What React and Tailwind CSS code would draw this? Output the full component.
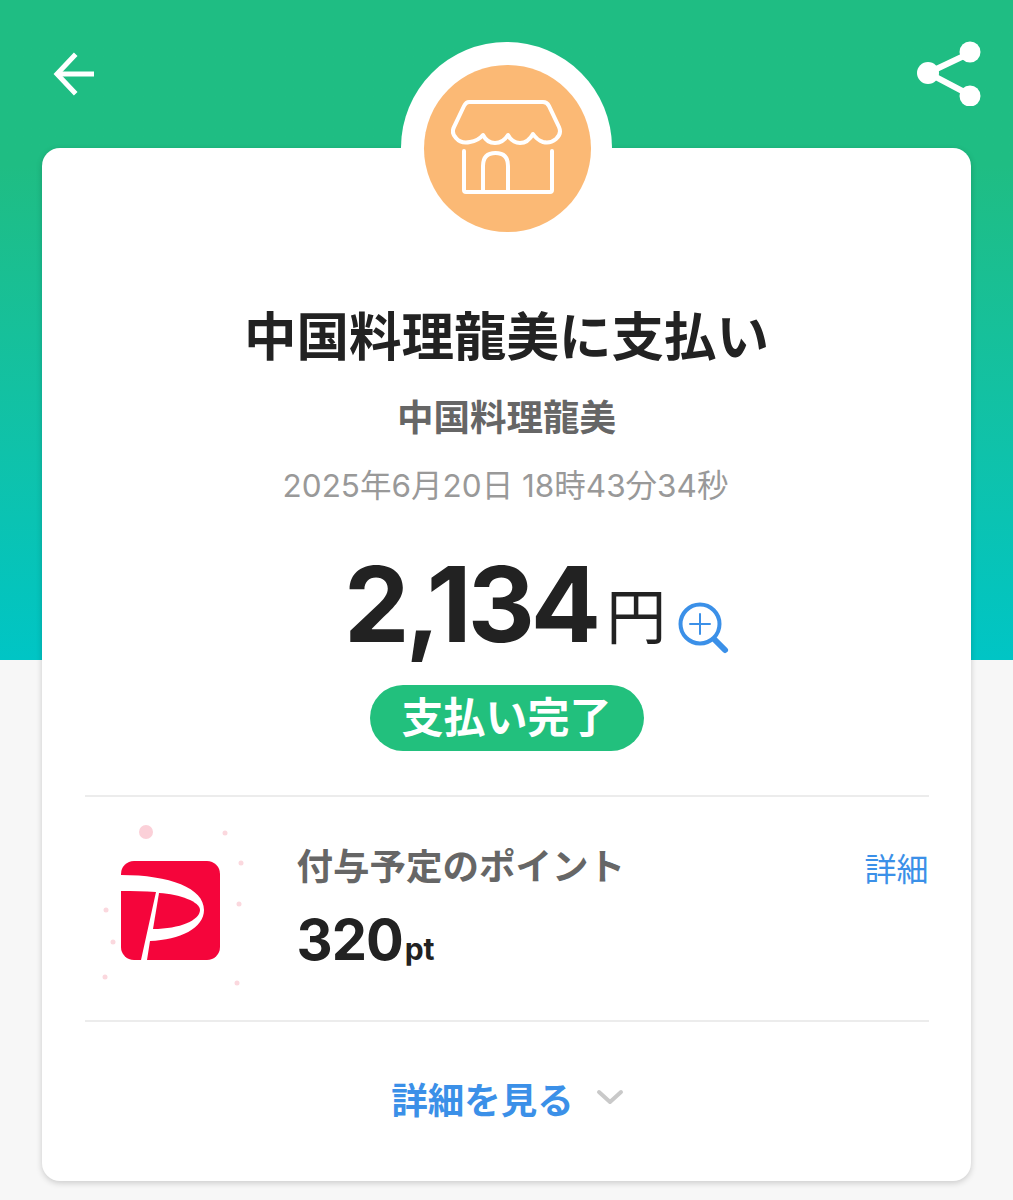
const fontStack = { fontFamily: '"Inter", "Noto Sans CJK JP", sans-serif' };

function BackIcon() {
  return (
    <svg width="46" height="44" viewBox="0 0 46 44" fill="none" stroke="white" strokeWidth="5" strokeLinecap="square">
      <path d="M22 4 L5 22 L22 40" strokeLinejoin="miter" />
      <path d="M7 22 H42" strokeLinecap="butt" />
    </svg>
  );
}

function ShareIcon() {
  return (
    <svg width="66" height="66" viewBox="0 0 66 66" fill="white">
      <path d="M52 14 L12 33 L52 54" fill="none" stroke="white" strokeWidth="6" />
      <circle cx="54" cy="12" r="10.5" />
      <circle cx="12" cy="33" r="11" />
      <circle cx="54" cy="56" r="10.5" />
    </svg>
  );
}

function ShopIcon() {
  return (
    <svg width="112" height="96" viewBox="0 0 112 96" fill="none" stroke="white" strokeWidth="4" strokeLinecap="round" strokeLinejoin="round">
      <path d="M18 2 H92 Q96 2 98 6 L108 27 Q111 34 105 39 Q99 44 92 42 Q86 40 82 34 Q77 43 69 43 Q61 43 57 35 Q52 43 44 43 Q36 43 32 35 Q27 41 19 42 Q10 44 5 38 Q0 33 3 27 L13 6 Q15 2 18 2 Z" />
      <path d="M13 51 V90 Q13 92 15 92 H99 Q101 92 101 90 V51" />
      <path d="M32 91 V66 Q32 53 44.5 53 Q57 53 57 66 V91" />
    </svg>
  );
}

function ZoomIcon() {
  return (
    <svg width="52" height="54" viewBox="0 0 52 54" fill="none" stroke="#3b90e8">
      <circle cx="22" cy="22" r="19.5" strokeWidth="4" />
      <path d="M22 12 V32 M12 22 H32" strokeWidth="2" strokeLinecap="round" />
      <path d="M37 38 L47 48" strokeWidth="6" strokeLinecap="round" />
    </svg>
  );
}

function PayPayLogo() {
  return (
    <svg width="172" height="180" viewBox="0 0 172 180" className="shrink-0">
      <circle cx="61" cy="23" r="7" fill="#fbd0d8" />
      <circle cx="140" cy="24" r="2.5" fill="#fbd8de" />
      <circle cx="156" cy="54" r="2.5" fill="#fbd8de" />
      <circle cx="154" cy="95" r="2.5" fill="#fbd8de" />
      <circle cx="21" cy="101" r="2.5" fill="#fbd8de" />
      <circle cx="28" cy="133" r="2.5" fill="#fbd8de" />
      <circle cx="20" cy="168" r="2.5" fill="#fbd8de" />
      <circle cx="152" cy="174" r="2.5" fill="#fbd8de" />
      <rect x="36" y="52" width="99" height="99" rx="13" fill="#f5053b" />
      <path d="M36 66 C85 66 119 79 119 101 C119 119 95 131 65 132 L62 151 L56 151 L71 83 C60 82 48 82 36 82 Z" fill="white" />
      <path d="M74 84 C95 85 115 93 115 101 C115 111 95 120 68 120 Z" fill="#f5053b" />
    </svg>
  );
}

export default function App() {
  return (
    <div className="min-h-[1200px] bg-[#f7f7f7] overflow-hidden" style={fontStack}>
      <div className="h-[660px] bg-gradient-to-b from-[#1fbd83] from-25% to-[#00c5c5] flex justify-between items-start pt-[40px] pl-[52px] pr-[31px]">
        <div className="mt-[12px]"><BackIcon /></div>
        <ShareIcon />
      </div>

      <div className="-mt-[512px] mx-[42px] h-[1033px] bg-white rounded-[18px] shadow-[0_2px_6px_rgba(0,0,0,0.18)] flex flex-col items-center">
        <div className="-mt-[106px] w-[211px] h-[211px] rounded-full bg-white flex items-center justify-center shrink-0">
          <div className="w-[167px] h-[167px] rounded-full bg-[#fbb975] flex items-center justify-center ml-[1px] mt-[1px]">
            <ShopIcon />
          </div>
        </div>

        <h1 className="mt-[48px] text-[52.5px] leading-[72px] font-bold text-[#222222] whitespace-nowrap">中国料理龍美に支払い</h1>
        <p className="mt-[20px] text-[36.5px] leading-[50px] font-bold text-[#666666] whitespace-nowrap">中国料理龍美</p>
        <p className="mt-[21px] text-[31.5px] leading-[44px] text-[#999999] whitespace-nowrap -ml-[2px]">2025年6月20日 18時43分34秒</p>

        <div className="mt-[41px] flex items-end self-start ml-[302px] h-[110px]">
          <span className="text-[104px] leading-[110px] font-bold text-[#222222] tracking-[-4px]">2,134</span>
          <span className="ml-[9px] mb-[7px] text-[60px] leading-[70px] text-[#222222]">円</span>
          <span className="ml-[12px] mb-[3px]"><ZoomIcon /></span>
        </div>

        <div className="mt-[26px] w-[274px] h-[66px] rounded-full bg-[#22c07d] flex items-center justify-center text-white text-[42px] font-bold leading-none whitespace-nowrap">
          支払い完了
        </div>

        <div className="mt-[44px] w-[844px] border-t-2 border-[#ececec] flex h-[225px]">
          <div className="mt-[12px]"><PayPayLogo /></div>
          <div className="ml-[40px] mt-[45px] flex flex-col">
            <span className="text-[36.5px] leading-[50px] font-bold text-[#666666] whitespace-nowrap">付与予定のポイント</span>
            <span className="mt-[13px] flex items-baseline font-bold text-[#222222]">
              <span className="text-[56px] leading-[70px] tracking-[-1px]">320</span>
              <span className="ml-[2px] text-[30px] leading-[70px]">pt</span>
            </span>
          </div>
          <span className="ml-auto mt-[51px] text-[32px] leading-[44px] text-[#3b90e8] whitespace-nowrap">詳細</span>
        </div>

        <div className="w-[844px] border-t-2 border-[#ececec]"></div>

        <div className="mt-[54px] flex items-center gap-[22px] ml-[2px]">
          <span className="text-[36.5px] leading-[50px] font-bold text-[#3b90e8] whitespace-nowrap">詳細を見る</span>
          <svg width="28" height="16" viewBox="0 0 28 16" fill="none" stroke="#c9c9c9" strokeWidth="4" strokeLinecap="round" strokeLinejoin="round" className="-mt-[8px]">
            <path d="M3 3 L14 13 L25 3" />
          </svg>
        </div>
      </div>
    </div>
  );
}
